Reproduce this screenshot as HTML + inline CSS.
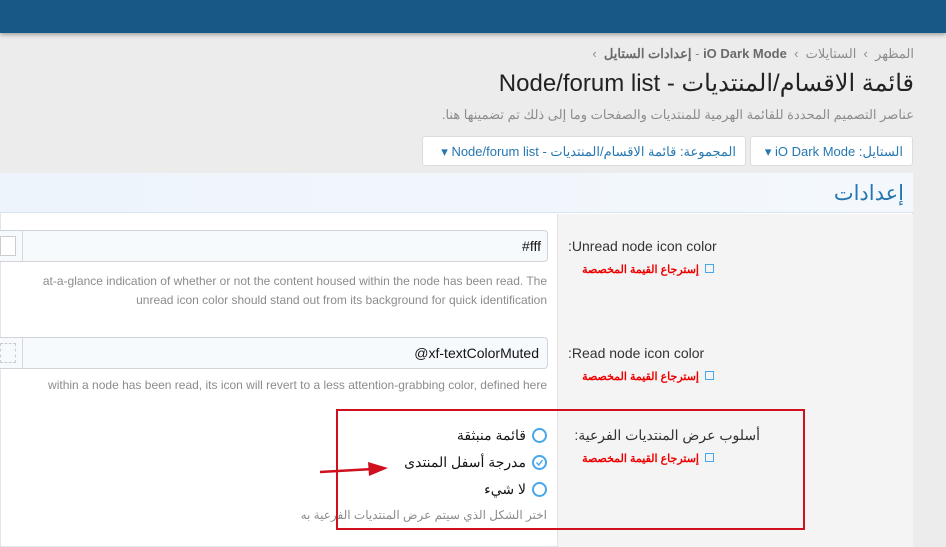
<!DOCTYPE html>
<html><head><meta charset="utf-8"><style>
*{margin:0;padding:0;box-sizing:border-box}
body{width:946px;height:547px;overflow:hidden;background:#ececec;font-family:"Liberation Sans","Noto Sans CJK SC",sans-serif;position:relative;color:#141414}
.a{position:absolute;white-space:nowrap}
.r{direction:rtl}
.rb{display:inline-block;width:15px;height:15px;border:2px solid #47a7eb;border-radius:50%;margin-left:6px;vertical-align:-3px;position:relative}
</style></head><body>
<div class="a" style="left:0;top:0;width:946px;height:33px;background:#185886;box-shadow:0 2px 4px rgba(0,0,0,.3)"></div>
<div class="a r" style="right:32px;top:46px;font-size:13px;color:#8c8c8c">المظهر &nbsp;›&nbsp; الستايلات &nbsp;›&nbsp; <b style="color:#6a6a6a">iO Dark Mode</b> - <b style="color:#6a6a6a">إعدادات الستايل</b> &nbsp;›</div>
<div class="a r" style="right:32px;top:69px;font-size:24px;color:#222">قائمة الاقسام/المنتديات - Node/forum list</div>
<div class="a r" style="right:32px;top:107px;font-size:13px;color:#8c8c8c">عناصر التصميم المحددة للقائمة الهرمية للمنتديات والصفحات وما إلى ذلك تم تضمينها هنا.</div>
<div class="a r" style="left:750px;top:136px;width:163px;height:30px;background:#fff;border:1px solid #dcdcdc;border-radius:3px;font-size:13px;color:#2577b1;padding:7px 9px 0 0">الستايل: iO Dark Mode ▾</div>
<div class="a r" style="left:422px;top:136px;width:324px;height:30px;background:#fff;border:1px solid #dcdcdc;border-radius:3px;font-size:13px;color:#2577b1;padding:7px 9px 0 0">المجموعة: قائمة الاقسام/المنتديات - Node/forum list ▾</div>
<div class="a" style="left:0;top:173px;width:913px;height:374px;background:#fff;border:1px solid #dfe6ee"></div>
<div class="a" style="left:0;top:173px;width:913px;height:40px;background:linear-gradient(to left,#f4f8fc,#edf4fb);border-bottom:1px solid #dbe4ee"></div>
<div class="a r" style="right:42px;top:181px;font-size:21px;color:#2577b1">إعدادات</div>
<div class="a" style="left:557px;top:214px;width:356px;height:333px;background:#f4f4f4;border-left:1px solid #e2e2e2"></div>
<div class="a" style="left:0;top:230px;width:548px;height:32px;background:#f7fafd;border:1px solid #d0d4d8;border-left:none;border-radius:0 4px 4px 0"></div>
<div class="a" style="left:0;top:236px;width:16px;height:20px;border:1px solid #ccc;background:#fff"></div>
<div class="a" style="left:22px;top:231px;width:1px;height:30px;background:#d8d8d8"></div>
<div class="a" style="right:405px;top:238px;font-size:14px">#fff</div>
<div class="a" style="right:399px;top:272px;font-size:12px;color:#8c8c8c;text-align:right;line-height:19px">at-a-glance indication of whether or not the content housed within the node has been read. The<br>unread icon color should stand out from its background for quick identification</div>
<div class="a" style="left:568px;top:238px;font-size:14px;color:#333">:Unread node icon color</div>
<div class="a r" style="right:232px;top:263px;font-size:11px;color:#e00;font-weight:bold"><span style="display:inline-block;width:9px;height:9px;border:1px solid #47a7eb;margin-left:6px"></span>إسترجاع القيمة المخصصة</div>
<div class="a" style="left:0;top:337px;width:548px;height:32px;background:#f7fafd;border:1px solid #d0d4d8;border-left:none;border-radius:0 4px 4px 0"></div>
<div class="a" style="left:0;top:343px;width:16px;height:20px;border:1px dashed #ccc"></div>
<div class="a" style="left:22px;top:338px;width:1px;height:30px;background:#d8d8d8"></div>
<div class="a" style="right:407px;top:345px;font-size:14px">@xf-textColorMuted</div>
<div class="a" style="right:399px;top:378px;font-size:12px;color:#8c8c8c">within a node has been read, its icon will revert to a less attention-grabbing color, defined here</div>
<div class="a" style="left:568px;top:345px;font-size:14px;color:#333">:Read node icon color</div>
<div class="a r" style="right:232px;top:370px;font-size:11px;color:#e00;font-weight:bold"><span style="display:inline-block;width:9px;height:9px;border:1px solid #47a7eb;margin-left:6px"></span>إسترجاع القيمة المخصصة</div>
<div class="a r" style="right:186px;top:427px;font-size:14px;color:#333">أسلوب عرض المنتديات الفرعية:</div>
<div class="a r" style="right:232px;top:452px;font-size:11px;color:#e00;font-weight:bold"><span style="display:inline-block;width:9px;height:9px;border:1px solid #47a7eb;margin-left:6px"></span>إسترجاع القيمة المخصصة</div>
<div class="a r" style="right:399px;top:427px;font-size:14px"><span class="rb"></span>قائمة منبثقة</div>
<div class="a r" style="right:399px;top:454px;font-size:14px"><span class="rb"><svg style="position:absolute;left:1px;top:1px" width="9" height="9"><polyline points="1.5,4.5 3.8,7 7.5,2" fill="none" stroke="#47a7eb" stroke-width="1.4"/></svg></span>مدرجة أسفل المنتدى</div>
<div class="a r" style="right:399px;top:481px;font-size:14px"><span class="rb"></span>لا شيء</div>
<div class="a r" style="right:399px;top:508px;font-size:12px;color:#8c8c8c">اختر الشكل الذي سيتم عرض المنتديات الفرعية به</div>
<div class="a" style="left:336px;top:409px;width:469px;height:121px;border:2px solid #d0101e"></div>
<svg class="a" style="left:318px;top:458px" width="72" height="22"><line x1="2" y1="14" x2="55" y2="11" stroke="#d0101e" stroke-width="2.5"/><polygon points="50,4 70,10 51,18" fill="#d0101e"/></svg>
</body></html>
